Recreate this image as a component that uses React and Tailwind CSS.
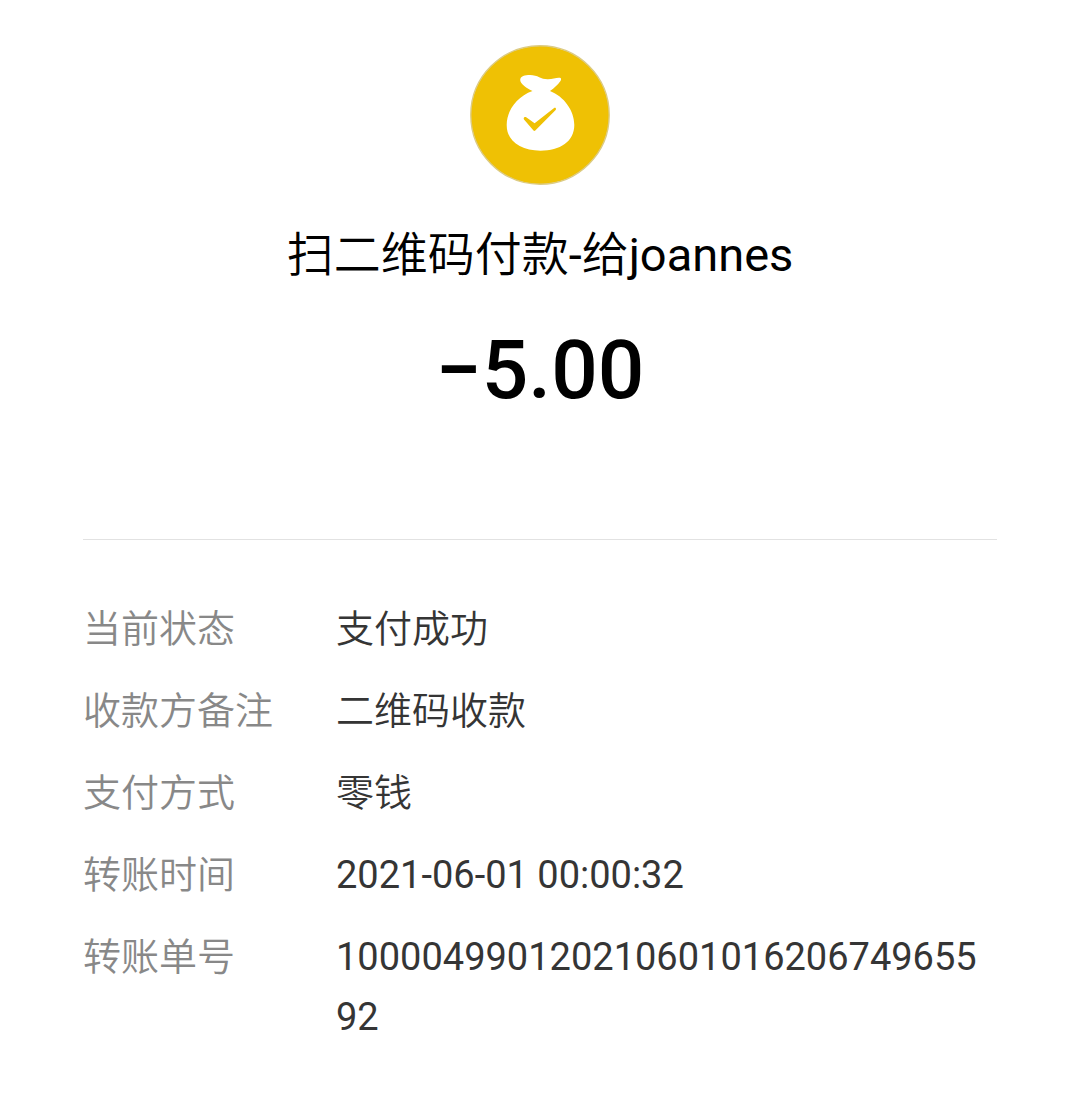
const details = [
  { label: '当前状态', value: '支付成功' },
  { label: '收款方备注', value: '二维码收款' },
  { label: '支付方式', value: '零钱' },
  { label: '转账时间', value: '2021-06-01 00:00:32' },
  { label: '转账单号', value: '10000499012021060101620674965592' },
];

function MoneyBagIcon() {
  return (
    <svg className="size-35" viewBox="0 0 140 140" aria-hidden="true">
      <circle cx="70" cy="70" r="69.2" fill="#efc104" stroke="#dccb84" strokeWidth="1.4" />
      <path
        fill="#fff"
        d="M50.2 35 C50.2 31 55 30 60 30 C68 30 71 34.5 78 34.3 C83 34 87 32.2 90 32.8 C91.5 33.3 91.3 35 90.3 36.3 C87.5 40 84.5 43 80 46 C94 51.5 104.3 65.5 104.3 80 C104.3 96.5 90 105.7 70.5 105.7 C51 105.7 36.7 96.5 36.7 80 C36.7 65.5 47 51.5 62.5 46 C57 43.5 50.2 39 50.2 35 Z"
      />
      <path
        fill="#efc104"
        d="M54.3 72.3 C54.8 71.8 55.6 71.8 56.2 72.2 L64.6 78.2 L83.8 63.2 C84.5 62.6 85.4 62.6 85.8 63.2 C86.2 63.8 86 64.6 85.4 65.2 L65.3 85.6 C64.7 86.2 64 86.2 63.5 85.6 L54 74.4 C53.5 73.7 53.7 72.9 54.3 72.3 Z"
      />
    </svg>
  );
}

export default function App() {
  return (
    <main className="min-h-screen bg-white px-[83px] pt-[45px] font-[Roboto,'Noto_Sans_CJK_SC_DemiLight','Noto_Sans_CJK_SC',sans-serif]">
      <header className="flex flex-col items-center border-b border-[#e2e2e2] pb-[120px]">
        <MoneyBagIcon />
        <h1 className="mt-9 text-[47px] leading-[68px] text-black">扫二维码付款-给joannes</h1>
        <p className="mt-8 text-[82px] leading-[98px] font-medium text-black">−5.00</p>
      </header>

      <dl className="mt-[59px] flex flex-col gap-[22px] text-[38px] leading-[60px]">
        {details.map(({ label, value }) => (
          <div key={label} className="flex">
            <dt className="w-[253px] shrink-0 text-[#888]">{label}</dt>
            <dd className="min-w-0 flex-1 break-all text-[#353535]">{value}</dd>
          </div>
        ))}
      </dl>
    </main>
  );
}
